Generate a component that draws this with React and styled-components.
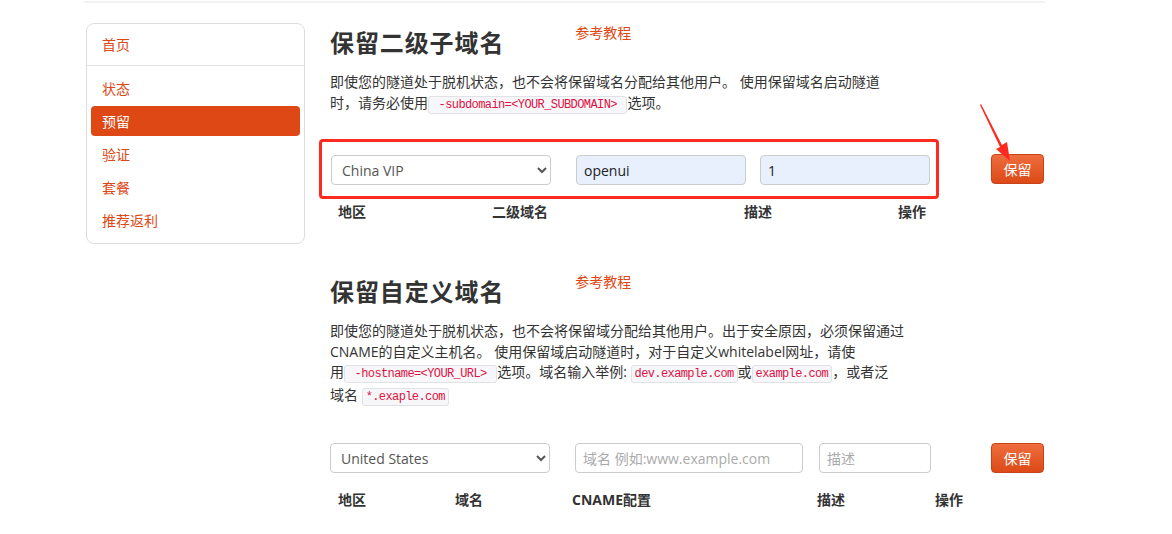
import React from 'react'
import styled, { createGlobalStyle } from 'styled-components'

const GlobalStyle = createGlobalStyle`
   body {
      margin: 0;
      background: #fff;
      font-family: "Open Sans", "Noto Sans CJK SC", sans-serif;
      font-size: 14px;
      color: #333;
   }
`

const Page = styled.div`
   width: 960px;
   margin: 1px 0 0 84px;
   border-top: 2px solid #f2f2f2;
   display: grid;
   grid-template-columns: 221px 1fr;
   column-gap: 25px;
   padding-right: 1px;
   position: relative;
`

const Sidebar = styled.nav`
   align-self: start;
   margin: 20px 0 0 2px;
   border: 1px solid #ddd;
   border-radius: 8px;
   padding: 5px 4px 8px;
   display: flex;
   flex-direction: column;
`

const NavItem = styled.a`
   display: flex;
   align-items: center;
   height: 30px;
   margin-bottom: ${({ $flush }) => ($flush ? '0' : '3px')};
   padding-left: 11px;
   border-radius: 4px;
   font-size: 14px;
   color: ${({ $active }) => ($active ? '#fff' : '#dd4814')};
   background: ${({ $active }) => ($active ? '#dd4814' : 'transparent')};
   text-decoration: none;
   cursor: pointer;
`

const NavDivider = styled.div`
   height: 1px;
   background: #e5e5e5;
   margin: 6px -4px 7px;
`

const Main = styled.main`
   display: flex;
   flex-direction: column;
`

const Section = styled.section`
   display: flex;
   flex-direction: column;
   margin-top: ${({ $top }) => $top};
`

const SectionHead = styled.div`
   display: flex;
   align-items: flex-start;
   gap: 71px;
`

const Title = styled.h2`
   margin: 5px 0 0;
   font-size: 24px;
   line-height: 30px;
   font-weight: 700;
   color: #333;
   letter-spacing: 0.9px;
`

const GuideLink = styled.a`
   line-height: 20px;
   font-size: 14px;
   color: #dd4814;
   text-decoration: none;
`

const Text = styled.p`
   margin: 14px 0 0;
   width: 600px;
   line-height: 20.5px;
   font-size: 14px;
   color: #333;
`

const Code = styled.code`
   font-family: "Liberation Mono", "DejaVu Sans Mono", monospace;
   font-size: 12px;
   letter-spacing: -0.6px;
   white-space: pre;
   color: #dd1144;
   background: #f7f7f9;
   border: 1px solid #e1e1e8;
   border-radius: 3px;
   padding: 1px 3px;
`

const FormRow = styled.div`
   display: flex;
   align-items: center;
   margin: ${({ $margin }) => $margin};
`

const Highlight = styled.div`
   display: flex;
   align-items: center;
   gap: 14px;
   margin-left: -11px;
   padding: 13px 6px 11px 9px;
   border: 3px solid #ff2a1f;
   border-radius: 4px;
`

const Fields = styled.div`
   display: flex;
   align-items: center;
`

const Select = styled.select`
   width: ${({ $w }) => $w};
   height: 30px;
   box-sizing: border-box;
   padding: 0 6px;
   margin-right: ${({ $gap }) => $gap || '11px'};
   border: 1px solid #ccc;
   border-radius: 4px;
   background: #fff;
   font-family: "Open Sans", "Noto Sans CJK SC", sans-serif;
   font-size: 14px;
   color: #555;
`

const Input = styled.input`
   width: ${({ $w }) => $w};
   height: 30px;
   box-sizing: border-box;
   padding: 0 7px;
   margin-right: ${({ $gap }) => $gap || '0'};
   border: 1px solid #ccc;
   border-radius: 4px;
   background: ${({ $filled }) => ($filled ? '#e8f0fe' : '#fff')};
   font-family: "Open Sans", "Noto Sans CJK SC", sans-serif;
   font-size: 14px;
   color: #222;
   outline: none;
   &::placeholder {
      color: #aaa;
   }
`

const SaveButton = styled.button`
   margin-left: auto;
   width: 53px;
   height: 30px;
   border: 1px solid #c9421a;
   border-radius: 4px;
   background: linear-gradient(#ef6d3e, #dc4a17);
   color: #fff;
   font-family: "Open Sans", "Noto Sans CJK SC", sans-serif;
   font-size: 14px;
   cursor: pointer;
`

const TableHead = styled.div`
   display: grid;
   grid-template-columns: ${({ $cols }) => $cols};
   margin-top: ${({ $top }) => $top};
   line-height: 20px;
`

const HeadCell = styled.div`
   padding-left: 8px;
   font-weight: 700;
   font-size: 14px;
   color: #333;
`

const Arrow = styled.svg`
   position: absolute;
   left: 892px;
   top: 98px;
   width: 40px;
   height: 64px;
   pointer-events: none;
`

const navItems = ['状态', '预留', '验证', '套餐', '推荐返利']

const App = () => {
   return (
      <>
         <GlobalStyle />
         <Page>
            <Sidebar>
               <NavItem $flush>首页</NavItem>
               <NavDivider />
               {navItems.map((item, i) => (
                  <NavItem key={item} $active={item === '预留'} $flush={i === navItems.length - 1}>
                     {item}
                  </NavItem>
               ))}
            </Sidebar>

            <Main>
               <Section $top="20px">
                  <SectionHead>
                     <Title>保留二级子域名</Title>
                     <GuideLink>参考教程</GuideLink>
                  </SectionHead>
                  <Text>
                     即使您的隧道处于脱机状态，也不会将保留域名分配给其他用户。 使用保留域名启动隧道<br />
                     时，请务必使用<Code> -subdomain=&lt;YOUR_SUBDOMAIN&gt; </Code>选项。
                  </Text>
                  <FormRow $margin="24px 0 0">
                     <Highlight>
                        <Select $w="220px" defaultValue="cnvip">
                           <option value="cnvip">China VIP</option>
                           <option value="us">United States</option>
                        </Select>
                        <Input $w="170px" $filled defaultValue="openui" />
                        <Input $w="170px" $filled defaultValue="1" />
                     </Highlight>
                     <SaveButton>保留</SaveButton>
                  </FormRow>
                  <TableHead $cols="154px 252px 154px 1fr" $top="3px">
                     <HeadCell>地区</HeadCell>
                     <HeadCell>二级域名</HeadCell>
                     <HeadCell>描述</HeadCell>
                     <HeadCell>操作</HeadCell>
                  </TableHead>
               </Section>

               <Section $top="50px">
                  <SectionHead>
                     <Title>保留自定义域名</Title>
                     <GuideLink>参考教程</GuideLink>
                  </SectionHead>
                  <Text>
                     即使您的隧道处于脱机状态，也不会将保留域分配给其他用户。出于安全原因，必须保留通过<br />
                     CNAME的自定义主机名。 使用保留域启动隧道时，对于自定义whitelabel网址，请使<br />
                     用<Code> -hostname=&lt;YOUR_URL&gt; </Code>选项。域名输入举例: <Code>dev.example.com</Code>或<Code>example.com</Code>，或者泛<br />
                     域名 <Code>*.exaple.com</Code>
                  </Text>
                  <FormRow $margin="36px 0 0">
                     <Fields>
                        <Select $w="220px" $gap="25px" defaultValue="us">
                           <option value="cnvip">China VIP</option>
                           <option value="us">United States</option>
                        </Select>
                        <Input $w="228px" $gap="16px" placeholder="域名 例如:www.example.com" />
                        <Input $w="112px" placeholder="描述" />
                     </Fields>
                     <SaveButton>保留</SaveButton>
                  </FormRow>
                  <TableHead $cols="117px 117px 245px 118px 1fr" $top="17px">
                     <HeadCell>地区</HeadCell>
                     <HeadCell>域名</HeadCell>
                     <HeadCell>CNAME配置</HeadCell>
                     <HeadCell>描述</HeadCell>
                     <HeadCell>操作</HeadCell>
                  </TableHead>
               </Section>
            </Main>

            <Arrow viewBox="0 0 40 64">
               <polygon points="4,4 5,3 26,44 31,41 34,60 20,48 24,46" fill="#ff2a1f" />
            </Arrow>
         </Page>
      </>
   )
}

export default App
